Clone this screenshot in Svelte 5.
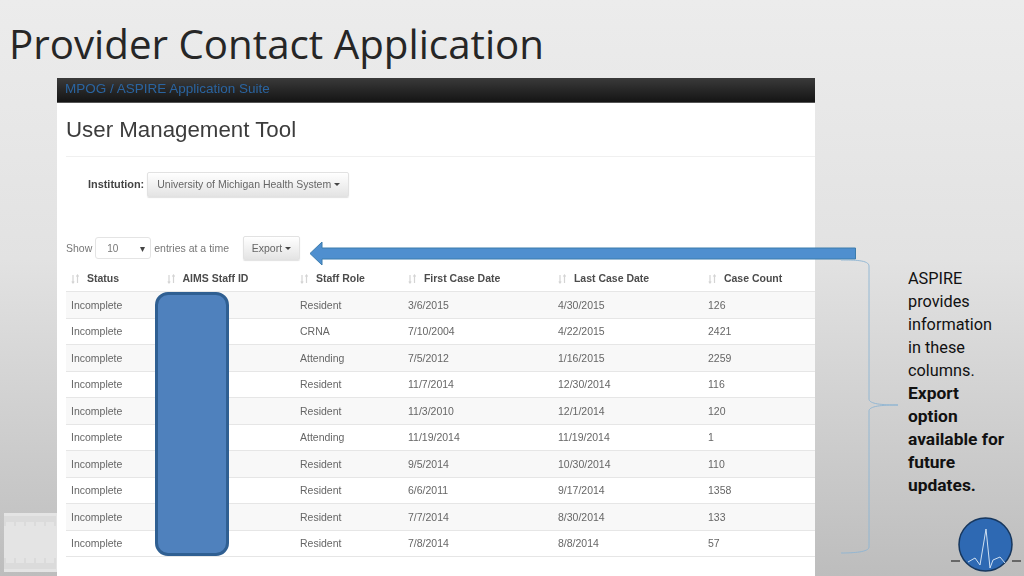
<script>
  const columns = [
    { label: 'Status' },
    { label: 'AIMS Staff ID' },
    { label: 'Staff Role' },
    { label: 'First Case Date' },
    { label: 'Last Case Date' },
    { label: 'Case Count' }
  ]

  const rows = [
    ['Resident', '3/6/2015', '4/30/2015', '126'],
    ['CRNA', '7/10/2004', '4/22/2015', '2421'],
    ['Attending', '7/5/2012', '1/16/2015', '2259'],
    ['Resident', '11/7/2014', '12/30/2014', '116'],
    ['Resident', '11/3/2010', '12/1/2014', '120'],
    ['Attending', '11/19/2014', '11/19/2014', '1'],
    ['Resident', '9/5/2014', '10/30/2014', '110'],
    ['Resident', '6/6/2011', '9/17/2014', '1358'],
    ['Resident', '7/7/2014', '8/30/2014', '133'],
    ['Resident', '7/8/2014', '8/8/2014', '57']
  ]

  // tick marks for the little thumbnail in the corner
  const ticks = Array.from({ length: 26 }, (_, i) => 1 + i * 2)
</script>

<div class="slide">
  <h1 class="title">Provider Contact Application</h1>

  <div class="content">
    <div class="gutter">
      <svg class="thumb" width="53" height="59" viewBox="0 0 53 59">
        <rect width="53" height="59" fill="#e4e4e4" />
        {#each ticks as x, i}
          <line x1={x} x2={x} y1="3" y2={i % 5 == 0 ? 13 : 9} stroke="#d2d2d2" />
          <line x1={x} x2={x} y1="56" y2={i % 5 == 0 ? 45 : 50} stroke="#d2d2d2" />
        {/each}
      </svg>
    </div>

    <div class="panel">
      <div class="navbar"><span class="brand">MPOG / ASPIRE Application Suite</span></div>
      <div class="body">
        <h2 class="tool">User Management Tool</h2>
        <div class="institution">
          <b>Institution:</b>
          <span class="btn wide">University of Michigan Health System <i class="caret"></i></span>
        </div>
        <div class="controls">
          <span>Show</span>
          <span class="select"><span>10</span><i class="down">▾</i></span>
          <span>entries at a time</span>
          <span class="btn export">Export <i class="caret"></i></span>
        </div>
        <div class="table">
          <div class="row head">
            {#each columns as col}
              <div class="cell">
                <svg class="sort" width="9" height="10" viewBox="0 0 9 10">
                  <path d="M2 1v8M.8 7.5 2 9l1.2-1.5M6.5 9V1M5.3 2.5 6.5 1l1.2 1.5" fill="none" stroke="#d4d4d4" stroke-width="1.2" />
                </svg>
                {col.label}
              </div>
            {/each}
          </div>
          {#each rows as row, i}
            <div class="row" class:odd={i % 2 == 0}>
              <div class="cell">Incomplete</div>
              <div class="cell"></div>
              {#each row as value}
                <div class="cell">{value}</div>
              {/each}
            </div>
          {/each}
        </div>
      </div>
    </div>

    <div class="note">
      ASPIRE provides information in these columns.
      <b>Export option available for future updates.</b>
    </div>
  </div>

  <div class="redact"></div>

  <svg class="arrow" width="548" height="25" viewBox="0 0 548 25">
    <path d="M1 12.5 13 1v6h533.5v11H13v6z" fill="#4f8fcf" stroke="#3c7cac" />
  </svg>

  <svg class="brace" width="60" height="296" viewBox="0 0 60 296">
    <path d="M1 1C14 1 29 1 29 7V140C29 145 42 146 58 146C42 146 29 147 29 152V288C29 293 14 294 1 294" fill="none" stroke="#8db4d3" stroke-width="0.9" />
  </svg>

  <svg class="logo" width="72" height="60" viewBox="0 0 72 60">
    <circle cx="34.5" cy="28.5" r="26.5" fill="#2e69b3" stroke="#17375e" stroke-width="1.5" />
    <path d="M0 45H9M61 45H70" stroke="#111" stroke-width="1.2" fill="none" />
    <path d="M17 46 24 42 29 49 35 13 39 52 42 44 49 41 54 47" fill="none" stroke="#cfe0f2" stroke-width="1" />
  </svg>
</div>

<style>
  :global(body) {
    margin: 0;
  }
  .slide {
    position: relative;
    width: 1024px;
    height: 576px;
    overflow: hidden;
    display: flex;
    flex-direction: column;
    background: linear-gradient(180deg, #ececec 0%, #e2e2e2 45%, #bdbdbd 100%);
    font-family: "Liberation Sans", Arial, sans-serif;
  }
  .title {
    margin: 0;
    height: 78px;
    padding: 16px 0 0 9px;
    box-sizing: border-box;
    font-family: "Open Sans", sans-serif;
    font-weight: 400;
    font-size: 40.3px;
    line-height: 56px;
    color: #262626;
    white-space: nowrap;
  }
  .content {
    flex: 1;
    display: flex;
    min-height: 0;
  }
  .gutter {
    width: 57px;
    flex: none;
    display: flex;
    align-items: flex-end;
    justify-content: flex-end;
    padding-bottom: 4px;
    box-sizing: border-box;
  }
  .thumb {
    display: block;
    filter: blur(0.5px);
  }
  .panel {
    width: 758px;
    flex: none;
    background: #fff;
    color: #666;
    font-size: 10.5px;
    filter: blur(0.5px);
    overflow: hidden;
  }
  .navbar {
    height: 25px;
    box-sizing: border-box;
    padding: 3px 0 0 8px;
    background: linear-gradient(180deg, #3a3a3a, #141414);
    border-bottom: 1px solid #555;
  }
  .brand {
    font-size: 13.5px;
    line-height: 16px;
    color: #2a64a0;
    white-space: nowrap;
  }
  .body {
    padding-left: 9px;
  }
  .tool {
    margin: 0;
    padding-top: 14px;
    height: 54px;
    box-sizing: border-box;
    border-bottom: 1px solid #f0f0f0;
    font-weight: 400;
    font-size: 22.3px;
    line-height: 25px;
    color: #3c3c3c;
  }
  .institution {
    display: flex;
    align-items: center;
    gap: 3px;
    height: 26px;
    margin: 14px 0 0 22px;
    color: #555;
  }
  .institution b {
    color: #444;
    font-size: 10.9px;
  }
  .btn {
    display: inline-flex;
    align-items: center;
    gap: 3px;
    box-sizing: border-box;
    height: 25px;
    border: 1px solid #e2e2e2;
    border-radius: 2px;
    background: linear-gradient(180deg, #fff, #e4e4e4);
    box-shadow: 0 1px 1px rgba(0, 0, 0, 0.12);
    color: #666;
    white-space: nowrap;
  }
  .wide {
    width: 202px;
    padding-left: 9px;
  }
  .caret {
    display: inline-block;
    border-top: 3px solid #444;
    border-left: 3px solid transparent;
    border-right: 3px solid transparent;
  }
  .controls {
    display: flex;
    align-items: center;
    height: 24px;
    margin-top: 39px;
    gap: 3px;
    color: #777;
  }
  .select {
    display: flex;
    align-items: center;
    justify-content: space-between;
    box-sizing: border-box;
    width: 56px;
    height: 22px;
    padding: 0 5px 0 11px;
    border: 1px solid #e4e4e4;
    border-radius: 3px;
    font-size: 10px;
  }
  .down {
    font-style: normal;
    font-size: 10px;
    color: #444;
  }
  .export {
    width: 57px;
    height: 24px;
    justify-content: center;
    margin-left: 11px;
  }
  .table {
    margin-top: 5px;
  }
  .row {
    display: grid;
    grid-template-columns: 96px 133px 108px 150px 150px 112px;
    height: 26.5px;
    box-sizing: border-box;
    border-bottom: 1px solid #e6e6e6;
    align-items: center;
  }
  .row.head {
    height: 27px;
    font-weight: 700;
    color: #4c4c4c;
  }
  .row.odd {
    background: #f8f8f8;
  }
  .cell {
    padding-left: 5px;
    white-space: nowrap;
  }
  .sort {
    vertical-align: -2px;
    margin-right: 4px;
  }
  .note {
    width: 98px;
    padding: 189px 0 0 93px;
    font-family: Roboto, sans-serif;
    font-size: 16.3px;
    line-height: 23px;
    color: #111;
    flex: none;
  }
  .note b {
    font-size: 17.4px;
  }
  .redact {
    position: absolute;
    left: 155px;
    top: 292px;
    width: 74px;
    height: 264px;
    box-sizing: border-box;
    background: #4f81bd;
    border: 3px solid #2f5f92;
    border-radius: 13px;
  }
  .arrow {
    position: absolute;
    left: 309px;
    top: 241px;
  }
  .brace {
    position: absolute;
    left: 840px;
    top: 259px;
  }
  .logo {
    position: absolute;
    left: 951px;
    top: 516px;
  }
</style>
